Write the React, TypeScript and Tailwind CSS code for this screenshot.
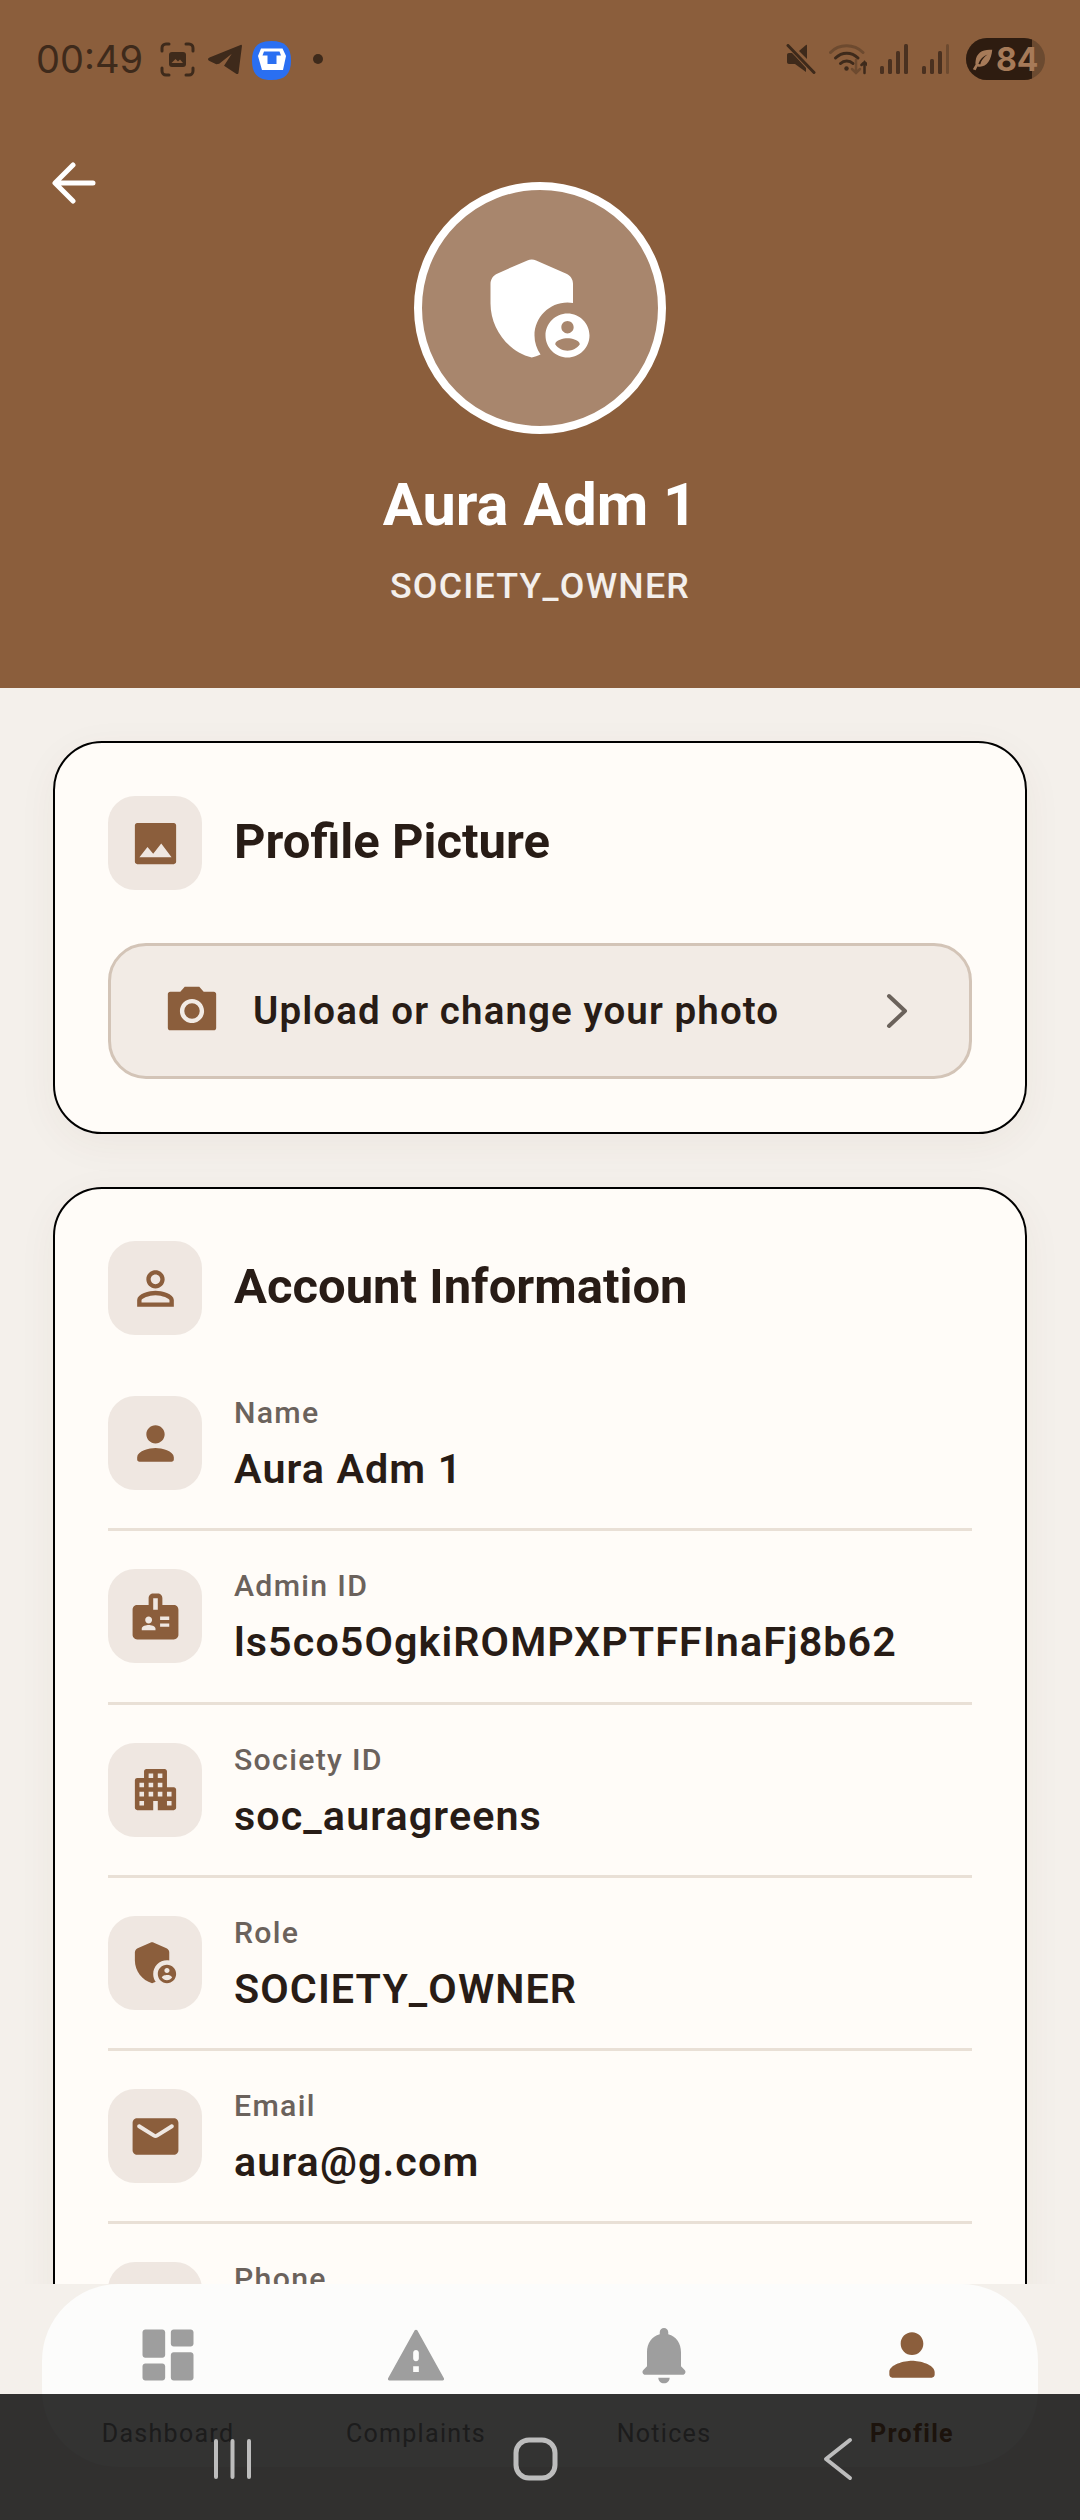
import React from "react";

const BROWN = "#8b5e3c";

const icons: Record<string, string> = {
  admin:
    "M17 11c.34 0 .67.04 1 .09V7.58c0-.8-.47-1.52-1.2-1.83l-5.5-2.4c-.51-.22-1.09-.22-1.6 0l-5.5 2.4C3.47 6.07 3 6.79 3 7.58v3.6c0 4.54 3.2 8.79 7.5 9.82.55-.13 1.08-.32 1.6-.55-.69-.98-1.1-2.17-1.1-3.45 0-3.31 2.69-6 6-6zM17 13c-2.21 0-4 1.79-4 4s1.79 4 4 4 4-1.79 4-4-1.79-4-4-4zm0 1.38c.62 0 1.12.51 1.12 1.12s-.51 1.12-1.12 1.12-1.12-.51-1.12-1.12.5-1.12 1.12-1.12zm0 5.37c-.93 0-1.74-.46-2.24-1.17.05-.72 1.51-1.08 2.24-1.08s2.19.36 2.24 1.08c-.5.71-1.31 1.17-2.24 1.17z",
  image:
    "M21 20V4c0-.55-.45-1-1-1H4c-.55 0-1 .45-1 1v16c0 .55.45 1 1 1h16c.55 0 1-.45 1-1zM8.5 13.5l2.5 3.01L14.5 12l4.5 6H5l3.5-4.5z",
  camera:
    "M9 2L7.17 4H3c-.55 0-1 .45-1 1v14c0 .55.45 1 1 1h18c.55 0 1-.45 1-1V5c0-.55-.45-1-1-1h-4.17L15 2H9zm3 15c-2.76 0-5-2.24-5-5s2.24-5 5-5 5 2.24 5 5-2.24 5-5 5zm0-8.2a3.2 3.2 0 1 0 0 6.4 3.2 3.2 0 0 0 0-6.4z",
  personOutline:
    "M12 5.9c1.16 0 2.1.94 2.1 2.1s-.94 2.1-2.1 2.1S9.9 9.16 9.9 8s.94-2.1 2.1-2.1m0 9c2.97 0 6.1 1.46 6.1 2.1v1.1H5.9V17c0-.64 3.13-2.1 6.1-2.1M12 4C9.79 4 8 5.79 8 8s1.79 4 4 4 4-1.79 4-4-1.79-4-4-4zm0 9c-2.67 0-8 1.34-8 4v3h16v-3c0-2.66-5.33-4-8-4z",
  person:
    "M12 12c2.21 0 4-1.79 4-4s-1.79-4-4-4-4 1.79-4 4 1.79 4 4 4zm0 2c-2.67 0-8 1.34-8 4v1c0 .55.45 1 1 1h14c.55 0 1-.45 1-1v-1c0-2.66-5.33-4-8-4z",
  badge:
    "M20 7h-5V4c0-1.1-.9-2-2-2h-2c-1.1 0-2 .9-2 2v3H4c-1.1 0-2 .9-2 2v11c0 1.1.9 2 2 2h16c1.1 0 2-.9 2-2V9c0-1.1-.9-2-2-2zM9 12c.83 0 1.5.67 1.5 1.5S9.83 15 9 15s-1.5-.67-1.5-1.5S8.17 12 9 12zm3 6H6v-.75c0-1 2-1.5 3-1.5s3 .5 3 1.5V18zm1-9h-2V4h2v5zm5 7.5h-4V15h4v1.5zm0-3h-4V12h4v1.5z",
  apartment:
    "M17 11V4c0-.55-.45-1-1-1H8c-.55 0-1 .45-1 1v3H4c-.55 0-1 .45-1 1v12c0 .55.45 1 1 1h7v-4h2v4h7c.55 0 1-.45 1-1v-8c0-.55-.45-1-1-1h-3zM7 19H5v-2h2v2zm0-4H5v-2h2v2zm0-4H5V9h2v2zm4 4H9v-2h2v2zm0-4H9V9h2v2zm0-4H9V5h2v2zm4 8h-2v-2h2v2zm0-4h-2V9h2v2zm0-4h-2V5h2v2zm4 12h-2v-2h2v2zm0-4h-2v-2h2v2z",
  email:
    "M20 4H4c-1.1 0-1.99.9-1.99 2L2 18c0 1.1.9 2 2 2h16c1.1 0 2-.9 2-2V6c0-1.1-.9-2-2-2zm-.4 4.25l-6.54 4.09c-.65.41-1.47.41-2.12 0L4.4 8.25c-.25-.16-.4-.43-.4-.72 0-.67.73-1.07 1.3-.72L12 11l6.7-4.19c.57-.35 1.3.05 1.3.72 0 .29-.15.56-.4.72z",
  dashboard:
    "M4 13h6c.55 0 1-.45 1-1V4c0-.55-.45-1-1-1H4c-.55 0-1 .45-1 1v8c0 .55.45 1 1 1zm0 8h6c.55 0 1-.45 1-1v-4c0-.55-.45-1-1-1H4c-.55 0-1 .45-1 1v4c0 .55.45 1 1 1zm10 0h6c.55 0 1-.45 1-1v-8c0-.55-.45-1-1-1h-6c-.55 0-1 .45-1 1v8c0 .55.45 1 1 1zM13 4v4c0 .55.45 1 1 1h6c.55 0 1-.45 1-1V4c0-.55-.45-1-1-1h-6c-.55 0-1 .45-1 1z",
  warning:
    "M2.6 21h18.8c.4 0 .65-.43.45-.77L12.45 3.3c-.2-.34-.7-.34-.9 0L2.15 20.23c-.2.34.05.77.45.77zM12 14.2c-.55 0-1-.45-1-1v-2c0-.55.45-1 1-1s1 .45 1 1v2c0 .55-.45 1-1 1zm1 3.8h-2v-2h2v2z",
  bell:
    "M12 22c1.1 0 2-.9 2-2h-4c0 1.1.9 2 2 2zm6-6v-5c0-3.07-1.63-5.64-4.5-6.32V4c0-.83-.67-1.5-1.5-1.5s-1.5.67-1.5 1.5v.68C7.64 5.36 6 7.92 6 11v5l-1.29 1.29c-.63.63-.19 1.71.7 1.71h13.17c.89 0 1.34-1.08.71-1.71L18 16z",
};

function Mi({ name, size, color }: { name: string; size: number; color: string }) {
  return (
    <svg width={size} height={size} viewBox="0 0 24 24" fill={color} className="shrink-0">
      <path d={icons[name]} />
    </svg>
  );
}

function IconBox({ name }: { name: string }) {
  return (
    <div className="w-[94px] h-[94px] shrink-0 rounded-[27px] bg-[#efe7e1] flex items-center justify-center">
      <Mi name={name} size={55} color={BROWN} />
    </div>
  );
}

function StatusBar() {
  return (
    <div className="h-[120px] flex items-start justify-between pl-[36px] pr-[35px] text-[#3e2a1b]">
      <div className="flex items-center h-[42px] mt-[38px]">
        <span className="text-[38px] leading-none font-['Inter','Roboto',sans-serif] w-[124px]">00:49</span>
        <svg width="35" height="35" viewBox="0 0 35 35" fill="none" stroke="#3e2a1b" strokeWidth="3" strokeLinecap="round">
          <path d="M2 9V6a4 4 0 0 1 4-4h3M26 2h3a4 4 0 0 1 4 4v3M33 26v3a4 4 0 0 1-4 4h-3M9 33H6a4 4 0 0 1-4-4v-3" />
          <rect x="9" y="10" width="17" height="15" rx="3" fill="#3e2a1b" stroke="none" />
          <path d="M11.500 21l4-4 2.500 2.500 2-2 3 3.500z" fill={BROWN} stroke="none" />
        </svg>
        <svg width="36" height="31" viewBox="0 0 36 32" className="ml-[12px]" fill="#3e2a1b">
          <path d="M0.500 16Q0 15 2 14L34 1q1.500-.5 1.500 1L32 29.500c-.2 1.500-1.300 2-2.500 1.200L17 22.500l8-12.500-13 10.500-3 .5-7-3.500c-1-.5-1.500-1-1.500-1.500z" />
        </svg>
        <svg width="39" height="39" viewBox="0 0 39 39" className="ml-[9px] mt-[3px]">
          <path d="M19.500 0C33 0 39 6 39 19.500S33 39 19.500 39 0 33 0 19.500 6 0 19.500 0z" fill="#2a6ff2" />
          <path d="M9 7.500h21.500l3.500 7.500-3 14H10L6 15z" fill="#fff" />
          <path d="M12 10.500h15.500l1.500 4H24.500V23h-9v-8.500H10.500z" fill="#2a6ff2" />
        </svg>
        <span className="ml-[22px] w-[10px] h-[10px] rounded-full bg-[#3e2a1b]" />
      </div>
      <div className="flex items-center h-[42px] mt-[38px]">
        <svg width="30" height="30" viewBox="0 0 30 30" fill="#3e2a1b">
          <path d="M1 11c0-1.200.8-2 2-2h3l3 3 11 12v4L9 20H3c-1.200 0-2-.8-2-2z" />
          <path d="M13 7l7-6c.6-.5 1-.2 1 .5V15z" />
          <path d="M2 1.500L28 28.500" stroke="#3e2a1b" strokeWidth="3" strokeLinecap="round" />
        </svg>
        <svg width="38" height="32" viewBox="0 0 38 32" fill="none" className="ml-[13px]" strokeLinecap="round">
          <path d="M1.500 9.500C10 .5 25 .5 34 9.500" stroke="#6d4a2f" strokeWidth="3" />
          <path d="M6.500 15c6.500-6.500 16-6.500 22.500 0" stroke="#3e2a1b" strokeWidth="3" />
          <path d="M11.500 20.500c3.500-3.500 9-3.500 12.500 0" stroke="#3e2a1b" strokeWidth="3" />
          <circle cx="17.500" cy="25.500" r="2.200" fill="#3e2a1b" />
          <path d="M27 17v13M23 26l4 4 4-4" stroke="#6d4a2f" strokeWidth="2.500" />
          <path d="M35.500 30V19M32.500 22l3-3 3 3" stroke="#3e2a1b" strokeWidth="2.500" />
        </svg>
        <svg width="28" height="30" viewBox="0 0 28 30" fill="#4a3120" className="ml-[13px]">
          <rect x="0" y="22" width="4" height="8" rx="1.500" />
          <rect x="8" y="15" width="4" height="15" rx="1.500" />
          <rect x="16" y="7" width="4" height="23" rx="1.500" />
          <rect x="24" y="0" width="4" height="30" rx="1.500" />
        </svg>
        <svg width="28" height="30" viewBox="0 0 28 30" fill="#4a3120" className="ml-[14px]">
          <rect x="0" y="22" width="4" height="8" rx="1.500" />
          <rect x="8" y="15" width="4" height="15" rx="1.500" />
          <rect x="16" y="7" width="4" height="23" rx="1.500" />
          <rect x="24" y="0" width="3" height="30" rx="1.500" fill="#6d4a2f" />
        </svg>
        <div className="relative ml-[16px] w-[79px] h-[42px] rounded-full overflow-hidden bg-[#6b4a30]">
          <div className="absolute inset-y-0 left-0 w-[66px] bg-[#2e1c10]" />
          <svg width="24" height="24" viewBox="0 0 24 26" className="absolute left-[5px] top-[10px]" fill="#a67a58">
            <path d="M22 2C12 1 5 5 4 14c-.3 2-.2 3 0 4L1 23l3 1 2-4c9 2 15-6 16-18zM7 17c2-5 5-8 10-10-4 3-7 6-8 11z" fillRule="evenodd" />
          </svg>
          <span className="absolute left-[30px] top-[4px] text-[32px] leading-[36px] font-bold text-[#a67a58] font-['Inter','Roboto',sans-serif]">84</span>
        </div>
      </div>
    </div>
  );
}

function Header() {
  return (
    <header className="relative h-[688px] shrink-0 bg-[#8b5e3c] text-white">
      <StatusBar />
      <svg width="44" height="42" viewBox="0 0 44 42" fill="none" stroke="#fff" strokeWidth="5" strokeLinecap="round" strokeLinejoin="round" className="absolute left-[52px] top-[162px]">
        <path d="M41 21H4M21 3L3 21l18 18" />
      </svg>
      <div className="flex flex-col items-center">
        <div className="mt-[62px] w-[252px] h-[252px] rounded-full border-[8px] border-white bg-white/25 flex items-center justify-center">
          <Mi name="admin" size={132} color="#ffffff" />
        </div>
        <h1 className="mt-[36px] text-[59.5px] leading-[70px] font-bold font-['Roboto',sans-serif]">Aura Adm 1</h1>
        <p className="mt-[24px] text-[35.750px] leading-[44px] font-medium font-['Roboto',sans-serif] tracking-[1.2px] text-white/90">SOCIETY_OWNER</p>
      </div>
    </header>
  );
}

const rows = [
  { icon: "person", label: "Name", value: "Aura Adm 1" },
  { icon: "badge", label: "Admin ID", value: "ls5co5OgkiROMPXPTFFInaFj8b62" },
  { icon: "apartment", label: "Society ID", value: "soc_auragreens" },
  { icon: "admin", label: "Role", value: "SOCIETY_OWNER" },
  { icon: "email", label: "Email", value: "aura@g.com" },
  { icon: "person", label: "Phone", value: "" },
];

function Card({ children }: { children: React.ReactNode }) {
  return (
    <section className="rounded-[49px] border-2 border-black bg-[#fffcf8] px-[53px] shadow-[0_10px_40px_rgba(90,60,30,0.05)]">
      {children}
    </section>
  );
}

function Title({ icon, text }: { icon: string; text: string }) {
  return (
    <div className="flex items-center gap-[32px]">
      <IconBox name={icon} />
      <h2 className="-mt-[3px] text-[49px] leading-[60px] font-bold text-[#281c16] font-['Roboto',sans-serif]">{text}</h2>
    </div>
  );
}

const tabs = [
  { icon: "dashboard", label: "Dashboard" },
  { icon: "warning", label: "Complaints" },
  { icon: "bell", label: "Notices" },
  { icon: "person", label: "Profile", active: true },
];

function BottomNav() {
  return (
    <div className="h-[236px] shrink-0 bg-[#f4f0eb] px-[42px] relative">
      <nav className="h-[183px] rounded-[77px] bg-[#fcfcfb] flex px-[2px]">
        {tabs.map((t) => (
          <div key={t.label} className="flex-1 flex flex-col items-center pt-[37px]">
            <Mi name={t.icon} size={68} color={t.active ? BROWN : "#9e9e9e"} />
            <span
              className={
                t.active
                  ? "mt-[27px] text-[25px] leading-[36px] font-bold text-[#8b5e3c] font-['Roboto',sans-serif] tracking-[1.3px]"
                  : "mt-[27px] text-[25px] leading-[36px] font-normal text-[#8c8c8c] font-['Roboto',sans-serif] tracking-[1.3px]"
              }
            >
              {t.label}
            </span>
          </div>
        ))}
      </nav>
    </div>
  );
}

function SystemBar() {
  return (
    <div className="absolute inset-x-0 bottom-0 h-[126px] bg-black/80">
      <svg width="1080" height="126" viewBox="0 2394 1080 126" fill="none" stroke="#bdbdbd">
        <path d="M216 2441v36M232.500 2441v36M249 2441v36" strokeWidth="4" strokeLinecap="round" />
        <rect x="516" y="2440" width="39" height="38" rx="13" strokeWidth="5" />
        <path d="M850 2440l-24 19 24 19" strokeWidth="4" strokeLinecap="round" strokeLinejoin="round" />
      </svg>
    </div>
  );
}

export default function App() {
  return (
    <div className="relative w-[1080px] h-[2520px] overflow-hidden bg-[#f4f0eb] flex flex-col font-['Roboto',sans-serif]">
      <Header />
      <main className="flex-1 min-h-0 overflow-hidden px-[53px] pt-[53px] flex flex-col gap-[53px]">
        <Card>
          <div className="pt-[53px] pb-[53px]">
            <Title icon="image" text="Profile Picture" />
            <div className="mt-[53px] h-[136px] rounded-[38px] border-[3px] border-[#d3c4b7] bg-[#f2ebe5] flex items-center pl-[52px] pr-[58px]">
              <Mi name="camera" size={58} color={BROWN} />
              <span className="ml-[32px] flex-1 text-[38.5px] font-semibold text-[#281c16] tracking-[1.1px]">Upload or change your photo</span>
              <svg width="24" height="36" viewBox="0 0 24 36" fill="none" stroke="#6b625b" strokeWidth="4" strokeLinecap="round" strokeLinejoin="round" className="-translate-x-[2px]">
                <path d="M4 3l16 15L4 33" />
              </svg>
            </div>
          </div>
        </Card>
        <Card>
          <div className="pt-[52px]">
            <Title icon="personOutline" text="Account Information" />
            <div className="mt-[23px]">
              {rows.map((r, i) => (
                <div key={r.label} className={i === rows.length - 1 ? "flex gap-[32px] py-[38.125px]" : "flex gap-[32px] py-[38.125px] border-b-[3px] border-[#e9e0d6]"}>
                  <IconBox name={r.icon} />
                  <div className="h-[94px] -mt-[1px]">
                    <div className="text-[30.25px] leading-[35px] font-medium tracking-[1.3px] text-[#6b625c]">{r.label}</div>
                    <div className="mt-[15px] text-[41.25px] leading-[48px] font-semibold tracking-[1.1px] text-[#281c16]">{r.value}</div>
                  </div>
                </div>
              ))}
            </div>
          </div>
        </Card>
      </main>
      <BottomNav />
      <SystemBar />
    </div>
  );
}
